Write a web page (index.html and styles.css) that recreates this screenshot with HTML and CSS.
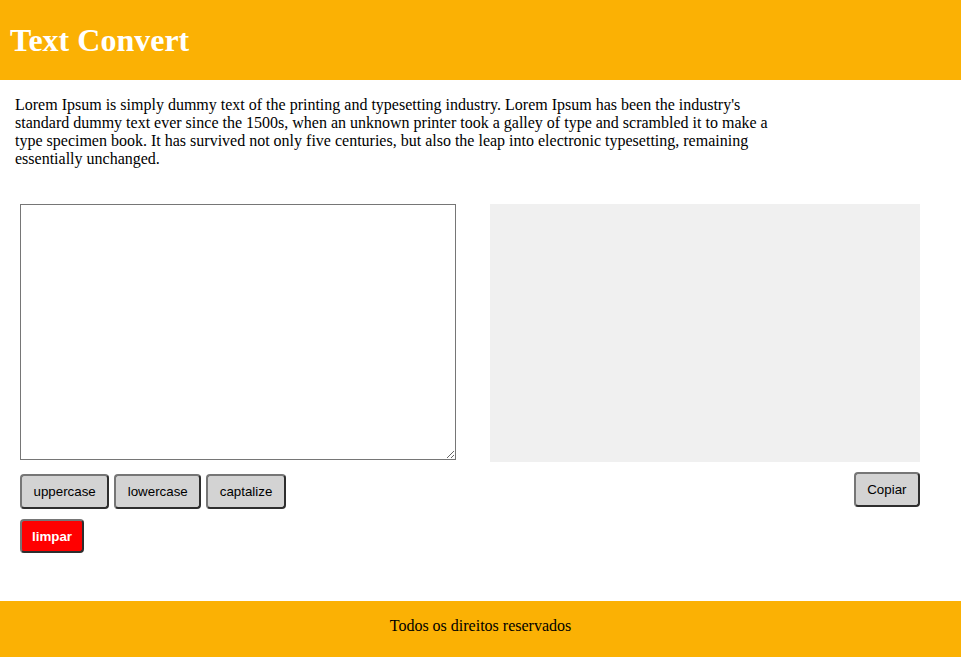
FILE: index.html
```html
<!DOCTYPE html>
<html lang="pt">
<head>
<meta charset="utf-8">
<title>Text Convert</title>
<link rel="stylesheet" href="styles.css">
</head>
<body>
<header class="site-header">
  <h1 class="title">Text Convert</h1>
</header>
<p class="intro">Lorem Ipsum is simply dummy text of the printing and typesetting industry. Lorem Ipsum has been the industry's standard dummy text ever since the 1500s, when an unknown printer took a galley of type and scrambled it to make a type specimen book. It has survived not only five centuries, but also the leap into electronic typesetting, remaining essentially unchanged.</p>
<main class="editor">
  <section class="col-left">
    <textarea class="input"></textarea>
    <div class="btn-row">
      <button class="btn">uppercase</button>
      <button class="btn">lowercase</button>
      <button class="btn">captalize</button>
    </div>
    <div class="btn-row second">
      <button class="btn btn-clear">limpar</button>
    </div>
  </section>
  <section class="col-right">
    <div class="output"></div>
    <div class="copy-row">
      <button class="btn">Copiar</button>
    </div>
  </section>
</main>
<footer class="site-footer">Todos os direitos reservados</footer>
</body>
</html>
```
FILE: styles.css
```css
html, body {
  margin: 0;
  padding: 0;
}
body {
  font-family: "Liberation Serif", "Times New Roman", serif;
  font-size: 16px;
  color: #000;
  background: #fff;
}
.site-header {
  height: 80px;
  background: #fbb104;
  display: flex;
  align-items: center;
  padding-left: 10px;
}
.title {
  margin: 0;
  font-size: 32px;
  font-weight: bold;
  color: #fff;
}
.intro {
  margin: 16px 0 0 15px;
  width: 770px;
}
.editor {
  display: flex;
  gap: 34px;
  padding: 36px 0 0 20px;
}
.col-left {
  width: 436px;
}
.input {
  display: block;
  box-sizing: border-box;
  width: 436px;
  height: 256px;
  margin: 0;
  border: 1px solid #767676;
  border-radius: 0;
  padding: 2px;
  resize: both;
}
.btn-row {
  display: flex;
  gap: 5px;
  margin-top: 14px;
}
.btn-row.second {
  margin-top: 10px;
}
.btn {
  font-family: "Liberation Sans", Arial, sans-serif;
  font-size: 13.333px;
  line-height: 15px;
  color: #000;
  background: #d3d3d3;
  padding: 8px 11.5px;
  border: 2px solid;
  border-color: #767676 #2e2e2e #2e2e2e #767676;
  border-radius: 4px;
  cursor: pointer;
}
.btn-clear {
  background: #ff0000;
  color: #fff;
  font-weight: bold;
  padding: 8px 10px 7px;
}
.col-right {
  width: 430px;
}
.output {
  height: 258px;
  background: #f0f0f0;
}
.copy-row {
  display: flex;
  justify-content: flex-end;
  margin-top: 10px;
}
.site-footer {
  margin-top: 48px;
  height: 56px;
  box-sizing: border-box;
  padding-top: 16px;
  background: #fbb104;
  text-align: center;
}
```
